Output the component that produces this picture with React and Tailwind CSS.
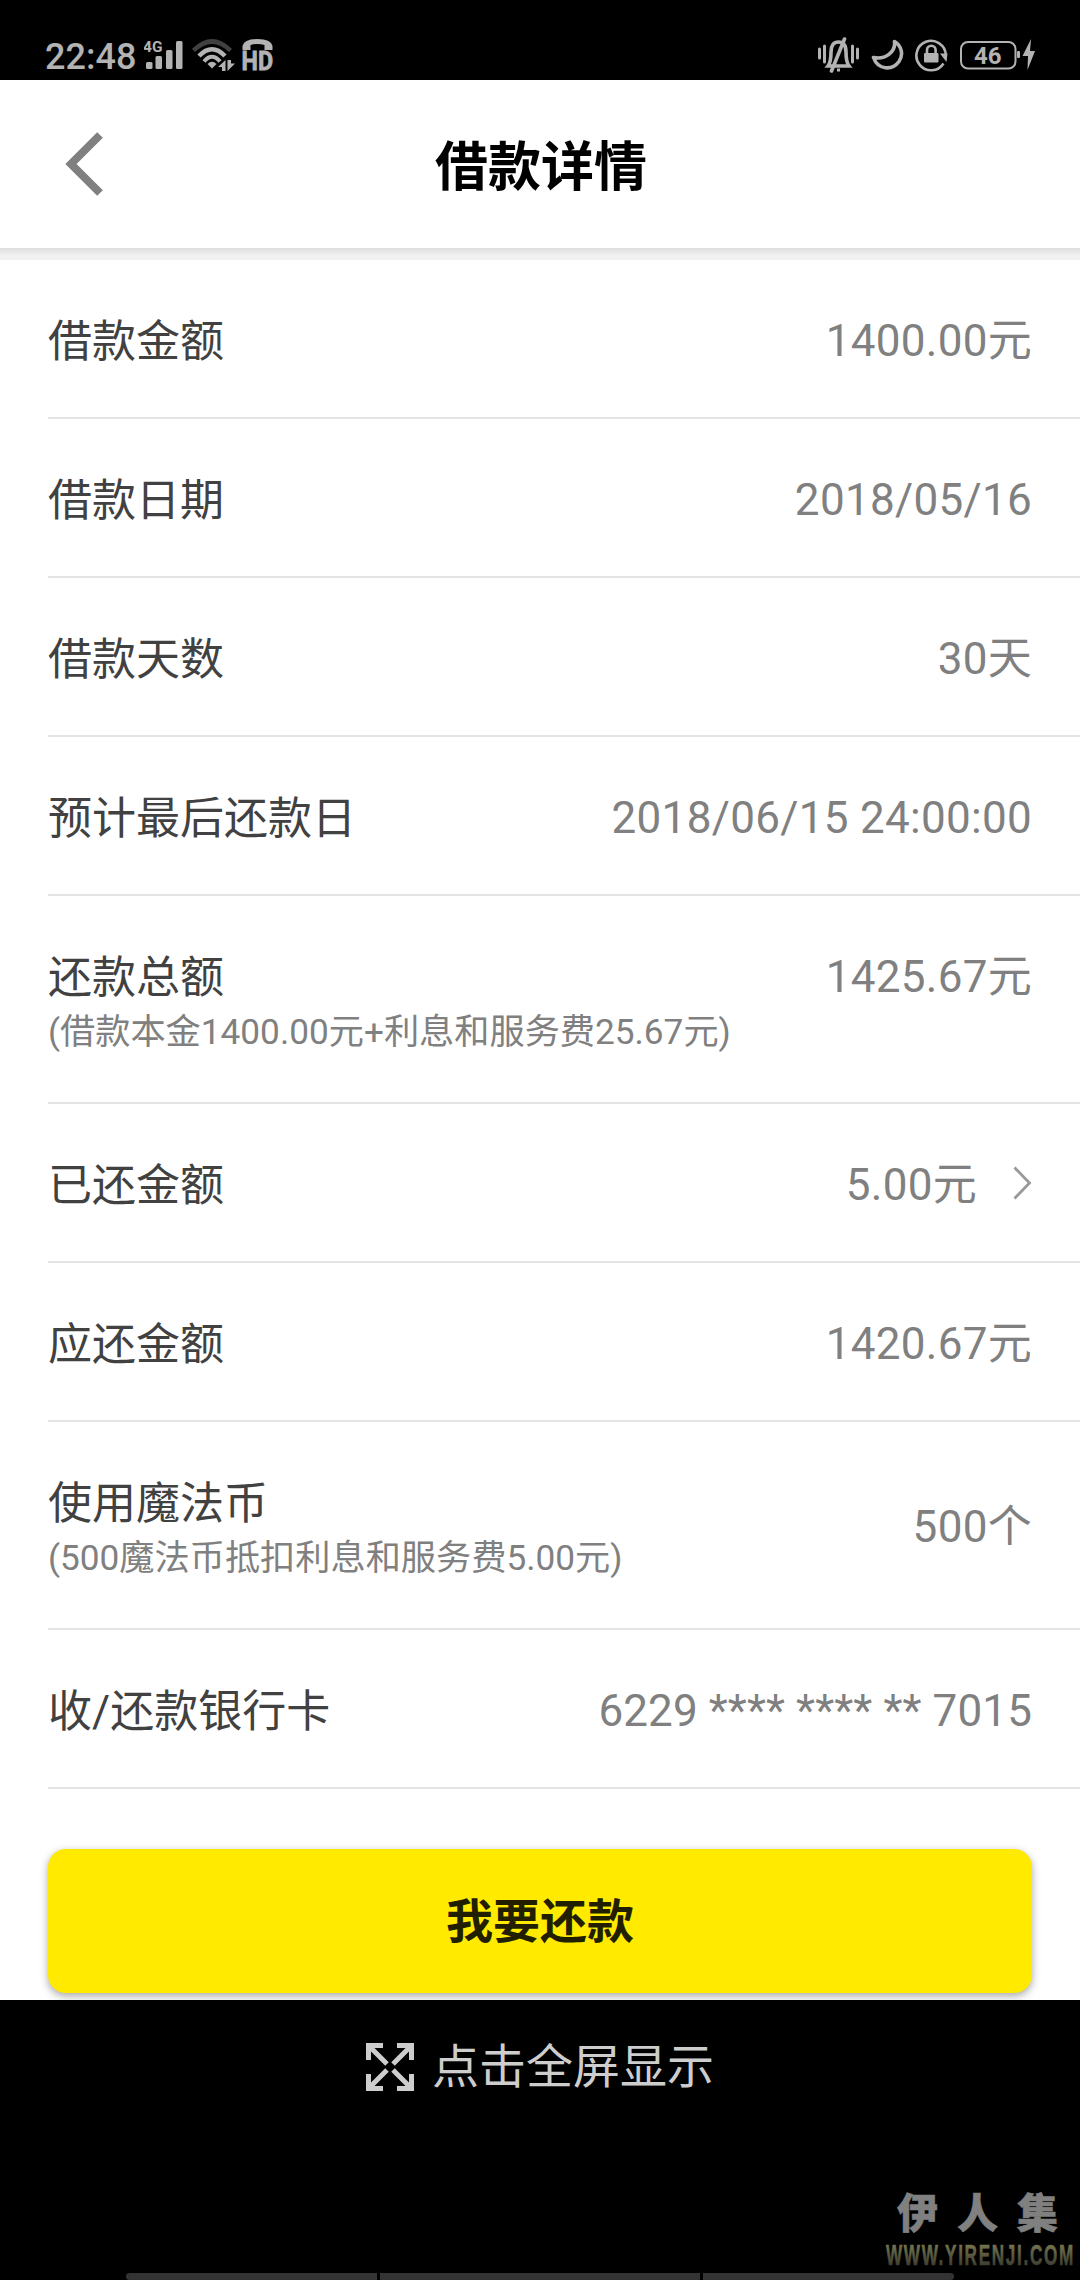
import { Fragment } from "react";

const rows = [
  { label: "借款金额", value: "1400.00元" },
  { label: "借款日期", value: "2018/05/16" },
  { label: "借款天数", value: "30天" },
  { label: "预计最后还款日", value: "2018/06/15 24:00:00" },
  {
    label: "还款总额",
    note: "(借款本金1400.00元+利息和服务费25.67元)",
    value: "1425.67元",
  },
  { label: "已还金额", value: "5.00元", link: true },
  { label: "应还金额", value: "1420.67元" },
  {
    label: "使用魔法币",
    note: "(500魔法币抵扣利息和服务费5.00元)",
    value: "500个",
    centered: true,
  },
  { label: "收/还款银行卡", value: "6229 **** **** ** 7015", tracking: "tracking-[0.12px]" },
];

const App = () => (
  <div className="flex h-[2280px] w-[1080px] flex-col overflow-hidden bg-black font-['Roboto','Noto_Sans_CJK_SC',sans-serif]">
    <StatusBar />
    <main className="h-[1920px] shrink-0 overflow-hidden bg-white">
      <Header />
      <div className="h-3 bg-linear-to-b from-[#dedede] to-[#f1f1f1] to-60%" />
      {rows.map((row) => (
        <Fragment key={row.label}>
          <DetailRow {...row} />
        </Fragment>
      ))}
      <div className="px-12 pt-[60px]">
        <button className="flex h-36 w-full items-center justify-center rounded-[18px] bg-[#ffea00] pt-[3px] text-[47px] font-bold text-[#221f00] shadow-[0_3px_8px_rgba(0,0,0,0.35)]">
          我要还款
        </button>
      </div>
    </main>
    <Footer />
  </div>
);

const Header = () => (
  <header className="grid h-42 grid-cols-[1fr_auto_1fr] items-center px-[65px]">
    <svg width="38" height="64" viewBox="0 0 38 64" fill="none">
      <path d="M35 3 L6 32 L35 61" stroke="#808080" strokeWidth="8" />
    </svg>
    <h1 className="pt-2 pl-[2px] text-[53px] leading-[160px] font-bold text-black">借款详情</h1>
  </header>
);

const DetailRow = ({ label, note, value, link, centered, tracking = "tracking-[0.3px]" }) => (
  <section
    className={`ml-12 flex justify-between border-b-2 border-[#e4e4e4] pr-12 ${note ? "h-52" : "h-[159px]"} ${centered ? "items-center" : "items-start"}`}
  >
    <div className={centered ? "self-start pt-[52px]" : "pt-[52px]"}>
      <p className="text-[44px] leading-[60px] text-[#414141]">{label}</p>
      {note && <p className="text-[35.2px] leading-[49px] text-[#808080]">{note}</p>}
    </div>
    <div className={`flex items-center ${centered ? "pt-1" : "pt-[51px]"}`}>
      <p className={`text-[44px] leading-[60px] text-[#808080] ${tracking}`}>{value}</p>
      {link && (
        <svg className="-mt-1 ml-[36px]" width="19" height="34" viewBox="0 0 19 34" fill="none">
          <path d="M1.5 1.5 L16.5 17 L1.5 32.5" stroke="#999" strokeWidth="2.8" />
        </svg>
      )}
    </div>
  </section>
);

const StatusBar = () => (
  <div className="flex h-20 shrink-0 items-start justify-between pr-[44px] pl-[45px] text-[#b3b3b3]">
    <div className="flex items-start">
      <span className="mt-[36px] w-[99px] text-[36px] leading-[42px] font-medium">22:48</span>
      <svg className="mt-[34px]" width="40" height="38" viewBox="0 -4 40 38" fill="currentColor">
        <text x="-1" y="14" fontSize="15.5" fontWeight="700">4G</text>
        <rect x="2" y="24" width="6.5" height="7" rx="1.5" />
        <rect x="11.5" y="18" width="6.5" height="13" rx="1.5" />
        <rect x="22" y="12" width="6.5" height="19" rx="1.5" />
        <rect x="32" y="3" width="6.5" height="28" rx="1.5" />
      </svg>
      <svg className="mt-[38px] ml-2" width="44" height="34" viewBox="0 0 44 34" fill="none">
        <path d="M1.5 12.5 Q20 -5.5 38.5 12.5" stroke="#404040" strokeWidth="4.5" />
        <path d="M7 18 Q20 4.5 33 18" stroke="currentColor" strokeWidth="4.5" />
        <path d="M12 23.5 Q20 14 28 23.5" stroke="currentColor" strokeWidth="4" />
        <path d="M15.5 26 Q20 21.5 24.5 26 L20 30.5 Z" fill="currentColor" />
        <path d="M33.5 22 V33 H30 V29 H26 Z" fill="currentColor" />
        <path d="M35.5 22 V33 L43 25.5 H39 V22 Z" fill="currentColor" />
      </svg>
      <svg className="mt-[38px] ml-[5px]" width="34" height="42" viewBox="-1 0 34 42" fill="currentColor">
        <path d="M0.5 12 V8 Q2 1 15.5 1 Q29 1 30.5 8 V12 H22.5 V7 Q15.5 5 8.5 7 V12 Z" />
        <text
          x="-0.5"
          y="31.5"
          fontSize="25"
          fontWeight="700"
          textLength="31.5"
          lengthAdjust="spacingAndGlyphs"
          stroke="currentColor"
          strokeWidth="0.8"
        >
          HD
        </text>
      </svg>
    </div>
    <div className="flex items-start">
      <svg className="mt-[37px]" width="42" height="36" viewBox="0 0 42 36" fill="none" stroke="currentColor">
        <path d="M1.5 12 V21 M6.5 9 V25 M34.5 9 V25 M39.5 12 V21" strokeWidth="3" strokeLinecap="round" />
        <path d="M10 29 Q13 25 13 15 Q13 5 20.5 5 Q28 5 28 15 Q28 25 31 29 Z" strokeWidth="3.6" />
        <path d="M26.5 2 L13.5 34" strokeWidth="3.6" strokeLinecap="round" />
        <path d="M19 33 H22" strokeWidth="3" />
      </svg>
      <svg className="mt-[38px] ml-[11px]" width="33" height="34" viewBox="0 0 33 34" fill="none">
        <path
          d="M23.5 3.5 C31 8 32.5 17 28 23.5 C21 33 7 32 2.5 19.5 C14 22 25 14 23.5 3.5 Z"
          stroke="currentColor"
          strokeWidth="3.6"
          strokeLinejoin="round"
        />
      </svg>
      <svg className="mt-[38px] ml-[11px]" width="34" height="34" viewBox="0 0 34 34" fill="none">
        <path d="M28.5 25.5 A14.7 14.7 0 1 1 30.8 17" stroke="currentColor" strokeWidth="2.6" />
        <path d="M25 15.5 L32.5 15.5 L31.5 24 Z" fill="currentColor" />
        <rect x="9" y="15" width="14.5" height="9.5" rx="1" fill="currentColor" />
        <path d="M12 15 V12 A4.3 4.3 0 0 1 20.6 12 V15" stroke="currentColor" strokeWidth="2.6" />
      </svg>
      <svg className="mt-[38px] ml-[11px]" width="76" height="34" viewBox="0 0 76 34">
        <rect x="1" y="4" width="54.5" height="26.5" rx="7" fill="none" stroke="currentColor" strokeWidth="2" />
        <text x="14" y="26" fontSize="24" fontWeight="700" fill="currentColor">46</text>
        <rect x="57" y="13" width="3" height="7" rx="1" fill="currentColor" />
        <path d="M71 1 L62.5 18 H68 L67.5 32 L75 13 H70 Z" fill="currentColor" />
      </svg>
    </div>
  </div>
);

const Footer = () => (
  <footer className="flex h-[280px] flex-col">
    <div className="mt-[36px] ml-[366px] flex items-center gap-[18px] text-[#cdcdcd]">
      <svg width="48" height="48" viewBox="0 0 48 48" fill="none" stroke="currentColor" strokeWidth="5">
        <path d="M2.5 17 V2.5 H17 M31 2.5 H45.5 V17 M45.5 31 V45.5 H31 M17 45.5 H2.5 V31" />
        <path d="M3 3 L21 21 M45 3 L27 21 M45 45 L27 27 M3 45 L21 27" />
      </svg>
      <p className="text-[47px] leading-[62px]">点击全屏显示</p>
    </div>
    <svg className="mt-[80px] ml-[880px]" width="200" height="94" viewBox="-4 -6 200 94">
      <defs>
        <linearGradient id="site" x1="0" y1="0" x2="0" y2="1">
          <stop offset="0.2" stopColor="#74744f" />
          <stop offset="0.85" stopColor="#3c3c30" />
        </linearGradient>
      </defs>
      <text x="13 73 133" y="44" fontSize="41" fontWeight="900" fill="#808080" stroke="#808080" strokeWidth="0.6">伊人集</text>
      <text
        x="2"
        y="81"
        fontSize="30"
        fontWeight="700"
        fontFamily="Liberation Sans Narrow, Liberation Sans, sans-serif"
        letterSpacing="3"
        textLength="189"
        lengthAdjust="spacingAndGlyphs"
        fill="url(#site)"
        stroke="url(#site)"
        strokeWidth="0.6"
      >
        WWW.YIRENJI.COM
      </text>
    </svg>
    <div className="mt-auto flex h-[7px] gap-[3px] px-[126px]">
      <div className="w-[251px] rounded-l-[4px] bg-[#333]" />
      <div className="w-[320px] bg-[#333]" />
      <div className="w-[251px] rounded-r-[4px] bg-[#333]" />
    </div>
  </footer>
);

export default App;
